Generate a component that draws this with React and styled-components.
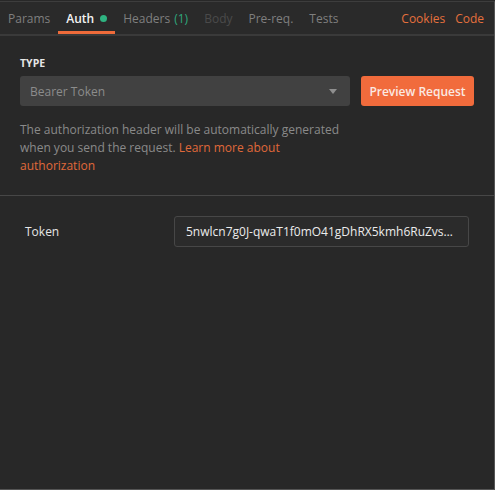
import React from "react";
import styled, { createGlobalStyle } from "styled-components";

const GlobalStyle = createGlobalStyle`
  html, body {
    margin: 0;
    padding: 0;
    background: #282828;
  }
  body {
    font-family: "Open Sans", "Noto Sans", sans-serif;
  }
`;

const tabs = [
  { label: "Params" },
  { label: "Auth", active: true, dot: true },
  { label: "Headers", count: "(1)" },
  { label: "Body", disabled: true },
  { label: "Pre-req." },
  { label: "Tests" },
];

function App() {
  return (
    <>
      <GlobalStyle />
      <Frame>
        <TabBar>
          <Tabs>
            {tabs.map((t) => (
              <Tab key={t.label} active={t.active} disabled={t.disabled}>
                {t.label}
                {t.count && <Count>{t.count}</Count>}
                {t.dot && <Dot />}
              </Tab>
            ))}
          </Tabs>
          <Links>
            <a href="#">Cookies</a>
            <a href="#">Code</a>
          </Links>
        </TabBar>

        <TypeSection>
          <Label>TYPE</Label>
          <Controls>
            <Select>
              <span>Bearer Token</span>
              <Caret />
            </Select>
            <PrimaryButton>Preview Request</PrimaryButton>
          </Controls>
          <Help>
            The authorization header will be automatically generated when you
            send the request. <a href="#">Learn more about authorization</a>
          </Help>
        </TypeSection>

        <Fields>
          <FieldRow>
            <FieldLabel>Token</FieldLabel>
            <Input>5nwlcn7g0J-qwaT1f0mO41gDhRX5kmh6RuZvsXyzQp</Input>
          </FieldRow>
        </Fields>
      </Frame>
    </>
  );
}

export default App;

const Frame = styled.div`
  box-sizing: border-box;
  margin-top: 1px;
  height: 489px;
  width: 495px;
  border-top: 1px solid #3d3d3d;
  border-right: 1px solid #555;
  border-bottom: 1px solid #555;
  background: #282828;
  display: flex;
  flex-direction: column;
  font-size: 12px;
`;

const TabBar = styled.div`
  display: flex;
  align-items: stretch;
  justify-content: space-between;
  height: 32px;
  border-bottom: 2px solid #3a3a3a;
  background: #2a2a2a;
`;

const Tabs = styled.div`
  display: flex;
  align-items: stretch;
`;

const Tab = styled.div`
  display: flex;
  align-items: center;
  padding: 3px 8px 0;
  color: ${(p) => (p.active ? "#f2f2f2" : p.disabled ? "#4a4a4a" : "#7f7f7f")};
  font-weight: ${(p) => (p.active ? 600 : 400)};
  border-bottom: 3px solid ${(p) => (p.active ? "#ef6b3a" : "transparent")};
  cursor: pointer;
`;

const Count = styled.span`
  color: #2fa77c;
  margin-left: 4px;
`;

const Dot = styled.span`
  width: 7px;
  height: 7px;
  border-radius: 50%;
  background: #2fb381;
  margin-left: 6px;
`;

const Links = styled.div`
  display: flex;
  align-items: center;
  gap: 10px;
  padding-right: 10px;
  a {
    color: #e5703d;
    text-decoration: none;
  }
`;

const TypeSection = styled.div`
  padding: 20px 20px 20px;
  border-bottom: 1px solid #474747;
`;

const Label = styled.div`
  color: #e6e6e6;
  font-size: 10.5px;
  font-weight: 700;
  margin-bottom: 6px;
`;

const Controls = styled.div`
  display: flex;
  gap: 11px;
  height: 30px;
`;

const Select = styled.div`
  box-sizing: border-box;
  width: 330px;
  display: flex;
  align-items: center;
  justify-content: space-between;
  padding: 0 13px 0 10px;
  background: #414141;
  border-radius: 3px;
  color: #8c8c8c;
`;

const Caret = styled.span`
  width: 0;
  height: 0;
  border-left: 4px solid transparent;
  border-right: 4px solid transparent;
  border-top: 5px solid #8f8f8f;
`;

const PrimaryButton = styled.button`
  box-sizing: border-box;
  width: 113px;
  border: none;
  border-radius: 3px;
  background: #f16b3c;
  color: #fbe9e2;
  font-family: inherit;
  font-size: 12px;
  font-weight: 600;
  padding: 0;
`;

const Help = styled.p`
  margin: 15px 0 0;
  width: 330px;
  color: #8a8a8a;
  line-height: 18px;
  a {
    color: #e0693a;
    text-decoration: none;
  }
`;

const Fields = styled.div`
  padding: 20px 25px 0 25px;
`;

const FieldRow = styled.div`
  display: flex;
  align-items: center;
`;

const FieldLabel = styled.div`
  width: 149px;
  color: #e6e6e6;
`;

const Input = styled.div`
  box-sizing: border-box;
  width: 295px;
  height: 31px;
  line-height: 29px;
  padding: 0 11px;
  border: 1px solid #474747;
  border-radius: 3px;
  background: #2b2b2b;
  color: #ececec;
  white-space: nowrap;
  overflow: hidden;
  text-overflow: ellipsis;
`;
